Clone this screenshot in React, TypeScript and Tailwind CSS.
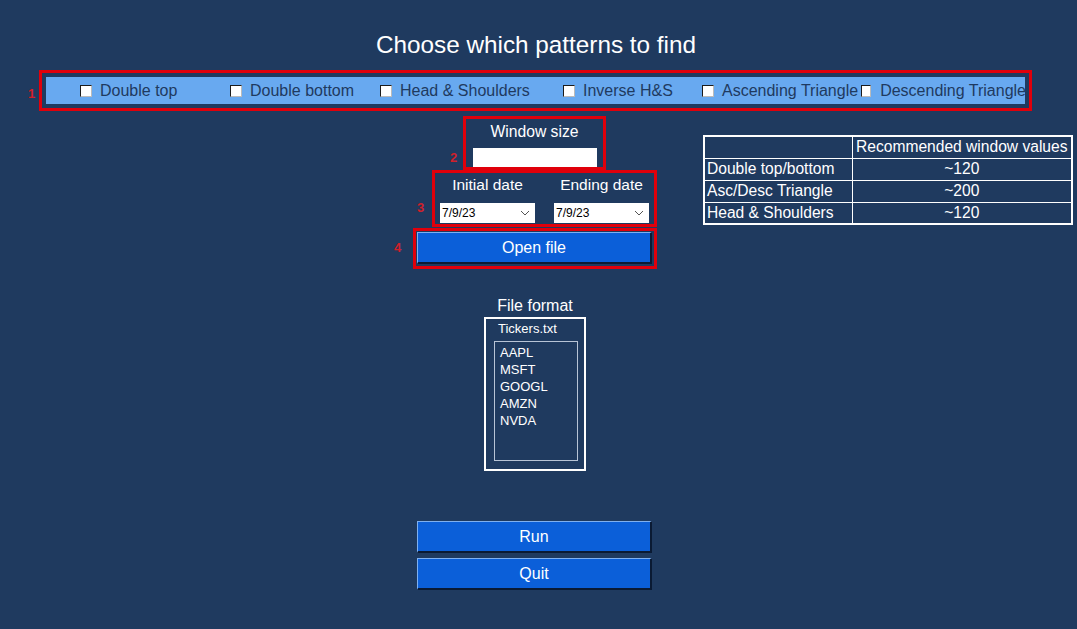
import { useState } from 'react'

const patterns = [
  { label: 'Double top', w: 'w-[150px]', gap: 'gap-[8px]' },
  { label: 'Double bottom', w: 'w-[150px]', gap: 'gap-[8px]' },
  { label: 'Head & Shoulders', w: 'w-[183px]', gap: 'gap-[8px]' },
  { label: 'Inverse H&S', w: 'w-[139px]', gap: 'gap-[8px]' },
  { label: 'Ascending Triangle', w: 'w-[159px]', gap: 'gap-[8px]' },
  { label: 'Descending Triangle', w: 'w-[165px]', gap: 'gap-[9px]' },
]

const tickers = ['AAPL', 'MSFT', 'GOOGL', 'AMZN', 'NVDA']

const recommended = [
  ['Double top/bottom', '~120'],
  ['Asc/Desc Triangle', '~200'],
  ['Head & Shoulders', '~120'],
]

function Num({ n, className }: { n: string; className: string }) {
  return (
    <span className={`absolute text-[13px] font-bold text-[#d0202a] leading-none ${className}`}>{n}</span>
  )
}

function DateSelect() {
  return (
    <div className="w-[95px] h-[20px] bg-white flex items-center justify-between pl-[2px] pr-[5px] text-[12px] text-black">
      <span>7/9/23</span>
      <svg width="10" height="6" viewBox="0 0 10 6" fill="none" stroke="#555" strokeWidth="1">
        <path d="M1 1l4 4 4-4" />
      </svg>
    </div>
  )
}

const btn = 'w-[235px] h-[32px] bg-[#0b5fd9] text-white text-[16px] border-t border-l border-[#7fb0f0] border-b-2 border-r-2 border-b-[#0a1a33] border-r-[#0a1a33] flex items-center justify-center'

export default function App() {
  const [checked, setChecked] = useState<boolean[]>(patterns.map(() => false))
  const [windowSize, setWindowSize] = useState('')

  return (
    <div className="w-[1077px] h-[629px] bg-[#1f3a5f] text-white overflow-hidden" style={{ fontFamily: '"Liberation Sans", Arial, sans-serif' }}>
      <h1 className="pt-[32px] text-center text-[24.3px] leading-[26px] pr-[5px]">Choose which patterns to find</h1>

      {/* patterns */}
      <div className="relative ml-[39px] mt-[12px] w-[993px] h-[41px] border-[3px] border-[#e0000b] p-[4px]">
        <Num n="1" className="left-[-14px] top-[14px]" />
        <div className="h-full bg-[#68a9f0] flex items-center pl-[34px] text-[#1f3a5f] text-[16px]">
          {patterns.map((p, i) => (
            <label key={p.label} className={`flex items-center shrink-0 ${p.w} ${p.gap}`}>
              <button
                onClick={() => setChecked(c => c.map((v, j) => (j === i ? !v : v)))}
                className="w-[12px] h-[12px] bg-white border border-[#1b1b1b] border-r-[#bbb] border-b-[#bbb] flex items-center justify-center text-[9px] leading-none"
              >
                {checked[i] ? '✓' : ''}
              </button>
              <span className="whitespace-nowrap">{p.label}</span>
            </label>
          ))}
        </div>
      </div>

      <div className="flex">
        <div className="w-[680px] flex flex-col">
          {/* 2 */}
          <div className="relative ml-[463px] mt-[5px] w-[143px] h-[54px] border-[3px] border-[#e0000b] flex flex-col items-center">
            <Num n="2" className="left-[-16px] top-[32px]" />
            <span className="text-[15.7px] leading-[20px] mt-[3px]">Window size</span>
            <input
              value={windowSize}
              onChange={e => setWindowSize(e.target.value)}
              className="mt-[6px] w-[124px] h-[19px] bg-white text-black text-[12px] px-1 outline-none"
            />
          </div>

          {/* 3 */}
          <div className="relative ml-[432px] w-[225px] h-[57px] border-[3px] border-[#e0000b] flex justify-between px-[5px] pt-[2px]">
            <Num n="3" className="left-[-18px] top-[28px]" />
            <div className="flex flex-col items-center">
              <span className="text-[15.5px] leading-[20px]">Initial date</span>
              <div className="mt-[8px]"><DateSelect /></div>
            </div>
            <div className="flex flex-col items-center">
              <span className="text-[15.5px] leading-[20px]">Ending date</span>
              <div className="mt-[8px]"><DateSelect /></div>
            </div>
          </div>

          {/* 4 */}
          <div className="relative ml-[413px] mt-[1px] w-[244px] h-[41px] border-[3px] border-[#e0000b] p-[1px]">
            <Num n="4" className="left-[-22px] top-[10px]" />
            <button className={btn}>Open file</button>
          </div>

          {/* file format */}
          <div className="ml-[484px] w-[102px] mt-[27px] flex flex-col items-center">
            <span className="text-[16px] leading-[20px]">File format</span>
            <div className="mt-[1px] w-[102px] h-[154px] border-2 border-white flex flex-col pl-[8px] pt-[2px]">
              <span className="text-[13px] leading-[16px] pl-[4px]">Tickers.txt</span>
              <div className="mt-[4px] w-[84px] h-[120px] border border-[#b8c4d6] px-[5px] pt-[2px] text-[13px] leading-[17px]">
                {tickers.map(t => <div key={t}>{t}</div>)}
              </div>
            </div>
          </div>

          <div className="ml-[417px] mt-[50px] flex flex-col gap-[5px]">
            <button className={btn}>Run</button>
            <button className={btn}>Quit</button>
          </div>
        </div>

        {/* table */}
        <div className="ml-[23px] mt-[24px]">
          <table className="w-[370px] border-2 border-white border-collapse text-[15.6px] leading-[20px]">
            <tbody>
              <tr className="h-[22px]">
                <td className="w-[148px] border border-white"></td>
                <td className="border border-white text-center">Recommended window values</td>
              </tr>
              {recommended.map(([k, v]) => (
                <tr key={k} className="h-[22px]">
                  <td className="border border-white pl-[2px] whitespace-nowrap">{k}</td>
                  <td className="border border-white text-center">{v}</td>
                </tr>
              ))}
            </tbody>
          </table>
        </div>
      </div>
    </div>
  )
}
